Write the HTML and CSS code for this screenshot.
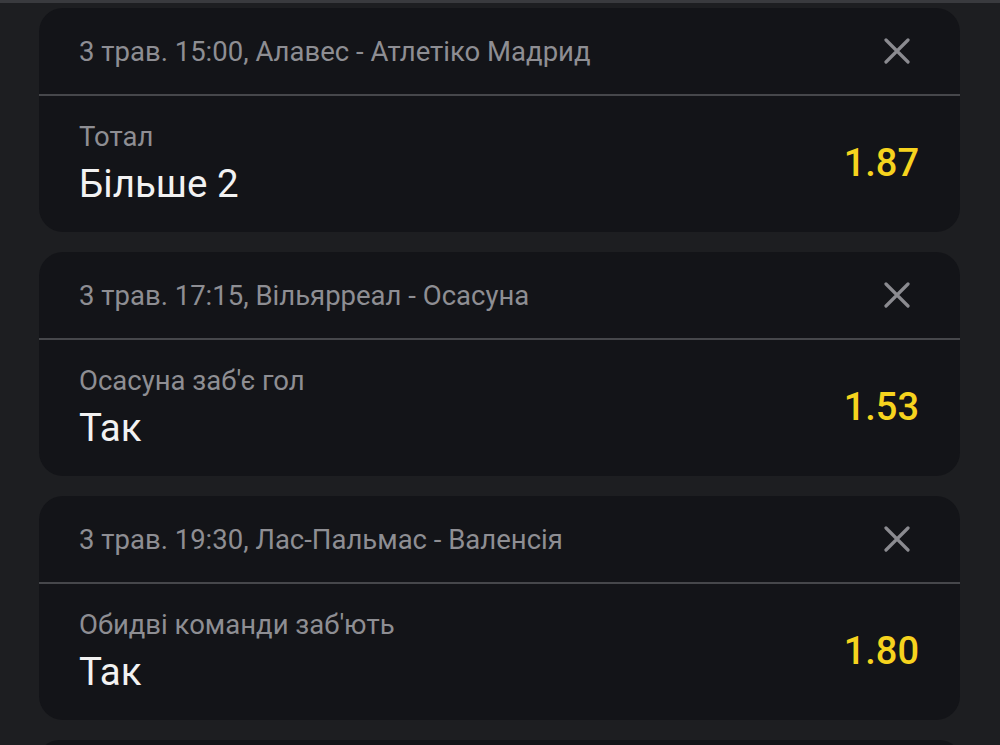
FILE: index.html
```html
<!DOCTYPE html>
<html lang="uk">
<head>
<meta charset="utf-8">
<link rel="stylesheet" href="styles.css">
</head>
<body>
<div class="topbar"></div>
<div class="list">
  <div class="card">
    <div class="card-head">
      <span class="event">3 трав. 15:00, Алавес - Атлетіко Мадрид</span>
      <svg class="close" width="26" height="26" viewBox="0 0 26 26"><path d="M2 2L24 24M24 2L2 24"/></svg>
    </div>
    <div class="card-body">
      <div class="pick">
        <div class="market">Тотал</div>
        <div class="selection">Більше 2</div>
      </div>
      <div class="odds">1.87</div>
    </div>
  </div>
  <div class="card">
    <div class="card-head">
      <span class="event">3 трав. 17:15, Вільярреал - Осасуна</span>
      <svg class="close" width="26" height="26" viewBox="0 0 26 26"><path d="M2 2L24 24M24 2L2 24"/></svg>
    </div>
    <div class="card-body">
      <div class="pick">
        <div class="market">Осасуна заб'є гол</div>
        <div class="selection">Так</div>
      </div>
      <div class="odds">1.53</div>
    </div>
  </div>
  <div class="card">
    <div class="card-head">
      <span class="event">3 трав. 19:30, Лас-Пальмас - Валенсія</span>
      <svg class="close" width="26" height="26" viewBox="0 0 26 26"><path d="M2 2L24 24M24 2L2 24"/></svg>
    </div>
    <div class="card-body">
      <div class="pick">
        <div class="market">Обидві команди заб'ють</div>
        <div class="selection">Так</div>
      </div>
      <div class="odds">1.80</div>
    </div>
  </div>
  <div class="card card-stub"></div>
</div>
</body>
</html>
```
FILE: styles.css
```css
html, body {
  margin: 0;
  padding: 0;
  background: #1d1e21;
  font-family: Roboto, "Noto Sans", sans-serif;
  overflow: hidden;
}
.topbar {
  height: 3px;
  background: #393a3e;
}
.list {
  display: flex;
  flex-direction: column;
  gap: 20px;
  padding: 5px 40px 0 39px;
}
.card {
  background: #131418;
  border-radius: 24px;
  overflow: hidden;
}
.card-head {
  height: 86px;
  display: flex;
  align-items: center;
  justify-content: space-between;
  padding: 0 50px 0 40px;
  border-bottom: 2px solid #46474b;
}
.event {
  font-size: 27.5px;
  color: #8e8e93;
}
.close {
  display: block;
  fill: none;
  stroke: #8b8b90;
  stroke-width: 3.2;
  stroke-linecap: round;
}
.card-body {
  height: 136px;
  display: flex;
  align-items: center;
  justify-content: space-between;
  padding: 0 41px 0 40px;
}
.market {
  font-size: 27.5px;
  line-height: 40px;
  color: #8e8e93;
}
.selection {
  font-size: 38.5px;
  line-height: 54px;
  color: #f2f2f2;
}
.odds {
  font-size: 38px;
  font-weight: 500;
  color: #f6d31e;
  margin-top: -3px;
}
.card-stub {
  height: 40px;
}
```
